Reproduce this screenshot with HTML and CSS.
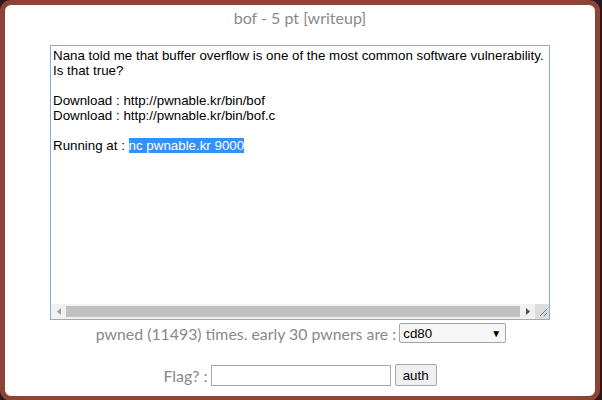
FILE: index.html
```html
<!DOCTYPE html>
<html>
<head>
<meta charset="utf-8">
<link rel="stylesheet" href="styles.css">
</head>
<body>
<div class="panel">
  <div class="title">bof - 5 pt [writeup]</div>
  <div class="ta">
    <div class="ta-content">Nana told me that buffer overflow is one of the most common software vulnerability.
Is that true?

Download : http://pwnable.kr/bin/bof
Download : http://pwnable.kr/bin/bof.c

Running at : <span class="sel">nc pwnable.kr 9000</span></div>
    <div class="hscroll">
      <div class="arrow left"><svg width="4" height="7" viewBox="0 0 4 7"><path d="M4 0 L0 3.5 L4 7 Z" fill="#a3a3a3"/></svg></div>
      <div class="track"><div class="thumb"></div></div>
      <div class="arrow right"><svg width="4" height="7" viewBox="0 0 4 7"><path d="M0 0 L4 3.5 L0 7 Z" fill="#505050"/></svg></div>
      <div class="corner"><svg width="14" height="14" viewBox="0 0 14 14"><path d="M5 12 L12 5 M9 12 L12 9" stroke="#777" stroke-width="1"/></svg></div>
    </div>
  </div>
  <div class="row pwned">
    <span>pwned (11493) times. early 30 pwners are :</span>
    <div class="select"><span>cd80</span><span class="caret">▼</span></div>
  </div>
  <div class="row flag">
    <span>Flag? :</span>
    <div class="input"></div>
    <div class="button">auth</div>
  </div>
</div>
</body>
</html>
```

FILE: styles.css
```css
html, body {
  margin: 0;
  padding: 0;
}
body {
  background: #2a1a20;
  width: 602px;
  height: 400px;
  overflow: hidden;
}
.panel {
  box-sizing: border-box;
  width: 600px;
  height: 401px;
  border: 5px solid #8b4435;
  border-radius: 11px;
  background: #fff;
  font-family: Lato, "Liberation Sans", sans-serif;
  color: #888;
  display: flex;
  flex-direction: column;
  align-items: center;
}
.title {
  font-size: 16px;
  line-height: 20px;
  margin-top: 3px;
  color: #8a8a8a;
}
.ta {
  box-sizing: border-box;
  width: 500px;
  height: 275px;
  margin-top: 17px;
  border: 1px solid #84aee8;
  display: flex;
  flex-direction: column;
  background: #fff;
}
.ta-content {
  flex: 1;
  padding: 2px 2px;
  font-family: "Liberation Sans", Arial, sans-serif;
  font-size: 13.33px;
  line-height: 15px;
  color: #000;
  white-space: pre;
  overflow: hidden;
}
.sel {
  background: #3390ff;
  color: #fff;
}
.hscroll {
  height: 15px;
  display: flex;
  background: #f1f1f1;
}
.arrow {
  width: 15px;
  display: flex;
  align-items: center;
  justify-content: center;
}
.track {
  flex: 1;
  display: flex;
  align-items: center;
}
.thumb {
  height: 11px;
  width: 100%;
  background: #c1c1c1;
}
.corner {
  width: 14px;
  background: #dcdcdc;
  display: flex;
}
.row {
  display: flex;
  align-items: center;
  font-size: 16px;
}
.pwned {
  margin-top: 3px;
  gap: 3px;
  margin-left: 2px;
  font-size: 15.85px;
}
.select {
  box-sizing: border-box;
  width: 107px;
  height: 20px;
  border: 1px solid #a6a6a6;
  border-radius: 2px;
  background: #f6f6f6;
  display: flex;
  align-items: center;
  justify-content: space-between;
  padding: 0 4px 0 3px;
  font-family: "Liberation Sans", Arial, sans-serif;
  font-size: 13.33px;
  color: #000;
}
.caret {
  font-size: 10px;
}
.flag {
  margin-top: 21px;
  gap: 3px;
  margin-left: 0;
}
.input {
  box-sizing: border-box;
  width: 180px;
  height: 21px;
  border: 1px solid #a9a9a9;
  background: #fff;
}
.button {
  box-sizing: border-box;
  height: 22px;
  padding: 0 7px;
  margin-left: 1px;
  border: 1px solid #a6a6a6;
  border-radius: 2px;
  background: #efefef;
  font-family: "Liberation Sans", Arial, sans-serif;
  font-size: 13.33px;
  color: #000;
  display: flex;
  align-items: center;
}
```
